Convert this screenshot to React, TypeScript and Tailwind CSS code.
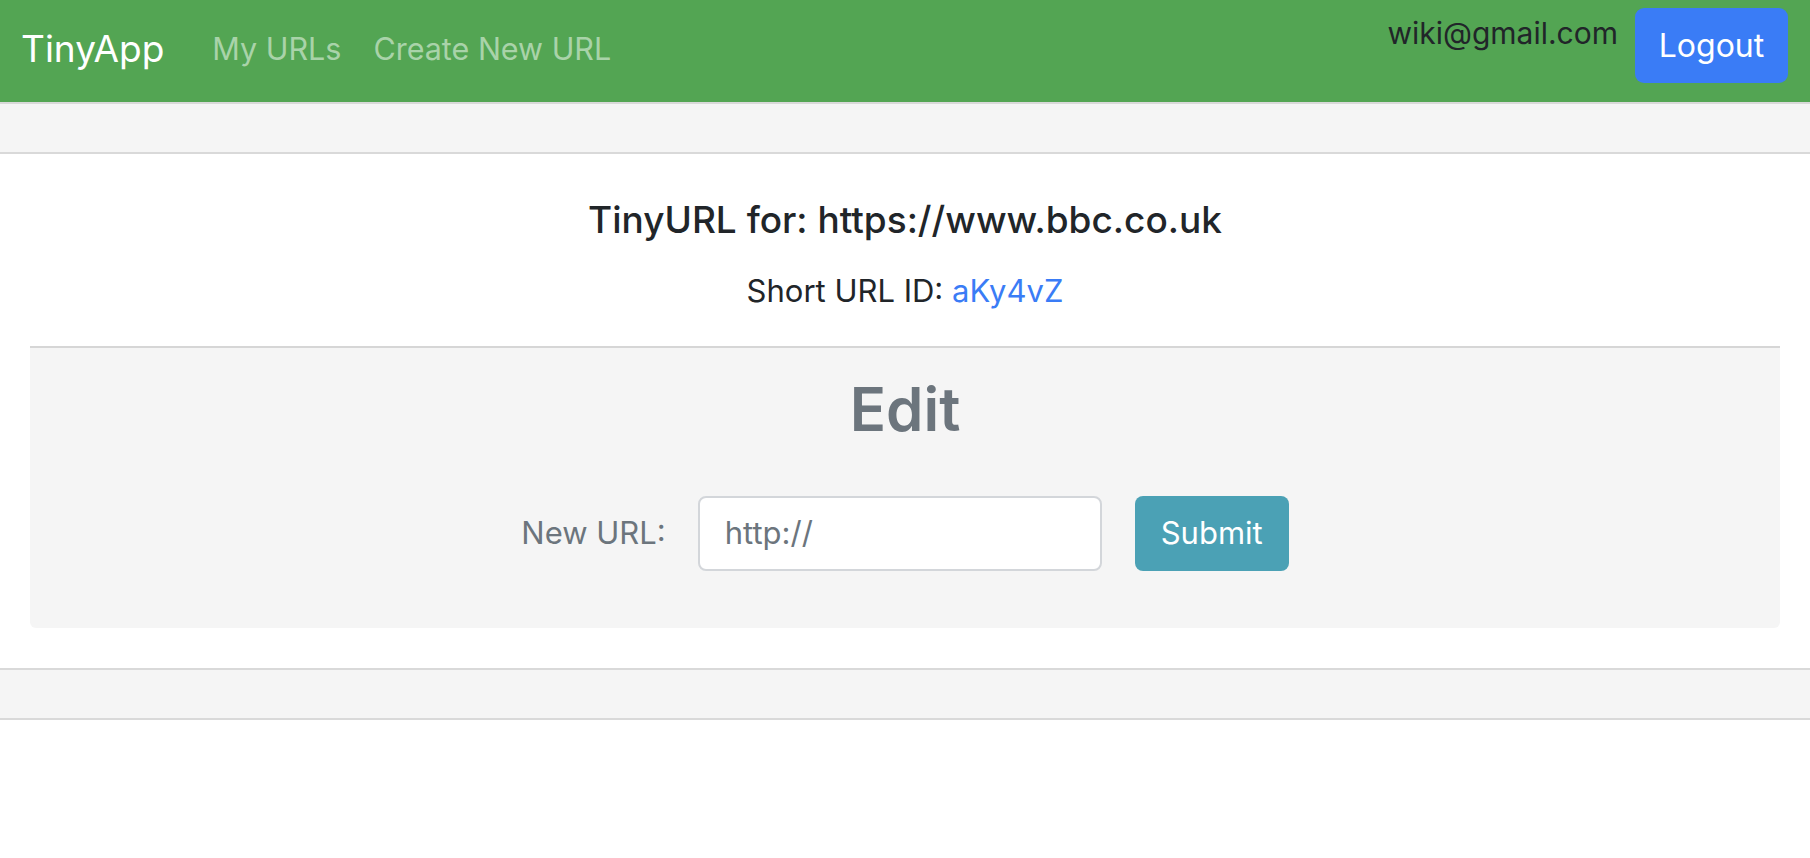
import React from "react";

export default function App() {
  return (
    <div
      className="min-h-[858px] bg-white text-[#212529]"
      style={{ fontFamily: "Inter, 'Noto Sans', 'Liberation Sans', sans-serif" }}
    >
      <nav className="flex h-[102px] items-center bg-[#53a553] pl-[21px] pr-[22px]">
        <span className="mb-[6px] text-[37px] leading-none text-white">TinyApp</span>
        <div className="mb-[4px] ml-[48px] flex gap-[32px] text-[30.5px] leading-none text-[#a9d3a9]">
          <span>My URLs</span>
          <span>Create New URL</span>
        </div>
        <div className="ml-auto flex items-start gap-[17px] self-stretch pt-[8px]">
          <span className="mt-[10px] text-[30px] leading-none text-[#212529]">wiki@gmail.com</span>
          <button className="h-[75px] w-[153px] rounded-[9px] bg-[#3a7cf6] text-[32px] text-white">
            Logout
          </button>
        </div>
      </nav>

      <div className="h-[52px] border-y-2 border-[#d9d9d9] bg-[#f5f5f5]" />

      <div className="pt-[44px] text-center">
        <h3 className="text-[37px] font-medium leading-[1.2]">TinyURL for: https://www.bbc.co.uk</h3>
        <p className="mt-[26px] text-[31px] leading-[1.5]">
          Short URL ID: <span className="text-[#3a7cf6]">aKy4vZ</span>
        </p>
      </div>

      <div className="mx-[30px] mt-[31px] rounded-b-[6px] border-t-2 border-[#d6d6d6] bg-[#f5f5f5] pt-[25px] pb-[57px]">
        <h1 className="text-center text-[60px] font-semibold leading-[1.2] text-[#6c757d]">Edit</h1>
        <div className="mt-[51px] flex items-center justify-center">
          <label className="text-[31px] text-[#6c757d]">New URL:</label>
          <div className="ml-[32px] flex h-[75px] w-[404px] items-center rounded-[8px] border-2 border-[#d3d6da] bg-white pl-[25px] text-[31px] text-[#6c757d]">
            http://
          </div>
          <button className="ml-[33px] h-[75px] w-[154px] rounded-[8px] bg-[#4ba1b5] text-[31px] text-white">
            Submit
          </button>
        </div>
      </div>

      <div className="mt-[40px] h-[52px] border-y-2 border-[#d9d9d9] bg-[#f5f5f5]" />
    </div>
  );
}
